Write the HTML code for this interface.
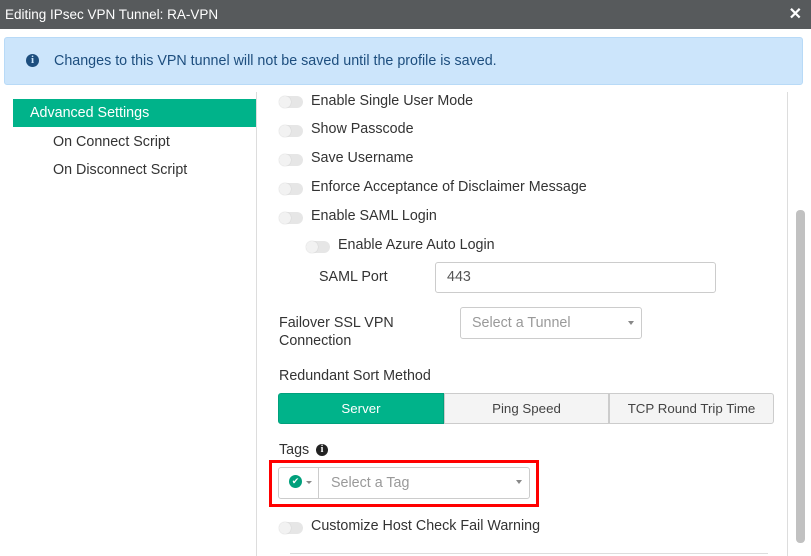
<!DOCTYPE html>
<html><head><style>
*{box-sizing:border-box;margin:0;padding:0}
body{width:811px;height:556px;overflow:hidden;background:#fff;font-family:"Liberation Sans",sans-serif;color:#333;position:relative}
.hdr{position:absolute;left:0;top:0;width:811px;height:29px;background:#575a5c;color:#fff;font-size:13.5px;line-height:29px;padding-left:5px}
.x{position:absolute;right:9px;top:0;font-size:16px;font-weight:bold}
.alert{position:absolute;left:4px;top:37px;width:799px;height:48px;background:#cce5fb;border:1px solid #b8daf7;border-radius:3px;color:#1d4e7e;font-size:14.3px;line-height:46px;padding-left:49px}
.ic{position:absolute;left:21px;top:16px;width:13px;height:13px;border-radius:50%;background:#1d4e7e;color:#cce5fb;font-size:11px;font-weight:bold;line-height:13px;text-align:center;font-family:"Liberation Serif",serif}
.nav{position:absolute;left:13px;top:99px;width:243px;height:28px;background:#00b38a;color:#fff;font-size:14.3px;line-height:28px;padding-left:17px}
.sub{position:absolute;left:53px;font-size:14.3px}
.vl{position:absolute;left:256px;top:92px;width:1px;height:464px;background:#ddd}
.vr{position:absolute;left:787px;top:92px;width:1px;height:464px;background:#ddd}
.sb{position:absolute;left:796px;top:210px;width:9px;height:333px;background:#c1c1c1;border-radius:4px}
.t{position:absolute;font-size:14.3px;color:#333}
.tg{position:absolute;width:24px;height:12px;border-radius:6px;background:#e6e6e6}
.tg::after{content:"";position:absolute;left:0;top:0;width:12px;height:12px;border-radius:50%;background:#f2f2f2;box-shadow:0 0 1px #bbb}
.inp{position:absolute;border:1px solid #ccc;border-radius:3px;font-size:14.3px;color:#555;padding-left:11px}
.car{position:absolute;right:7px;top:13px;border:3px solid transparent;border-top:4px solid #888}
.btn{position:absolute;top:393px;height:31px;line-height:30px;text-align:center;font-size:13.3px;border:1px solid #ccc;background:#f4f4f4;color:#444}
</style></head><body>
<div class="hdr">Editing IPsec VPN Tunnel: RA-VPN<span class="x">✕</span></div>
<div class="alert"><span class="ic">i</span>Changes to this VPN tunnel will not be saved until the profile is saved.</div>
<div class="nav">Advanced Settings</div>
<div class="sub" style="top:134px">On Connect Script</div>
<div class="sub" style="top:162px">On Disconnect Script</div>
<div class="vl"></div><div class="vr"></div><div class="sb"></div>

<div class="tg" style="left:279px;top:96px"></div><div class="t" style="left:311px;top:93px">Enable Single User Mode</div>
<div class="tg" style="left:279px;top:125px"></div><div class="t" style="left:311px;top:121px">Show Passcode</div>
<div class="tg" style="left:279px;top:154px"></div><div class="t" style="left:311px;top:150px">Save Username</div>
<div class="tg" style="left:279px;top:183px"></div><div class="t" style="left:311px;top:179px">Enforce Acceptance of Disclaimer Message</div>
<div class="tg" style="left:279px;top:212px"></div><div class="t" style="left:311px;top:208px">Enable SAML Login</div>
<div class="tg" style="left:306px;top:241px"></div><div class="t" style="left:338px;top:237px">Enable Azure Auto Login</div>
<div class="t" style="left:319px;top:269px">SAML Port</div>
<div class="inp" style="left:435px;top:262px;width:281px;height:31px;line-height:29px">443</div>
<div class="t" style="left:279px;top:314px;line-height:18px">Failover SSL VPN<br>Connection</div>
<div class="inp" style="left:460px;top:307px;width:182px;height:32px;line-height:30px;color:#999">Select a Tunnel<span class="car"></span></div>
<div class="t" style="left:279px;top:368px">Redundant Sort Method</div>
<div class="btn" style="left:278px;width:166px;background:#00b38a;border-color:#00a07c;color:#fff;border-radius:3px 0 0 3px">Server</div>
<div class="btn" style="left:444px;width:165px">Ping Speed</div>
<div class="btn" style="left:609px;width:165px;border-radius:0 3px 3px 0">TCP Round Trip Time</div>
<div class="t" style="left:279px;top:442px">Tags</div>
<span style="position:absolute;left:316px;top:444px;width:12px;height:12px;border-radius:50%;background:#222;color:#fff;font-size:10px;line-height:12px;text-align:center;font-weight:bold;font-family:'Liberation Serif',serif">i</span>
<div style="position:absolute;left:269px;top:460px;width:270px;height:47px;border:3px solid #f00"></div>
<div class="inp" style="left:278px;top:467px;width:252px;height:32px;padding:0"></div>
<div style="position:absolute;left:289px;top:475px;width:13px;height:13px;border-radius:50%;background:#00a07c;color:#fff;font-size:9px;line-height:13px;text-align:center">✔</div>
<div style="position:absolute;left:306px;top:481px;border:3px solid transparent;border-top:3px solid #888"></div>
<div style="position:absolute;left:318px;top:468px;width:1px;height:30px;background:#ccc"></div>
<div class="t" style="left:331px;top:475px;color:#999">Select a Tag</div>
<div style="position:absolute;left:516px;top:480px;border:3px solid transparent;border-top:4px solid #888"></div>
<div class="tg" style="left:279px;top:522px"></div><div class="t" style="left:311px;top:518px">Customize Host Check Fail Warning</div>
<div style="position:absolute;left:290px;top:553px;width:478px;height:1px;background:#ddd"></div>
</body></html>
